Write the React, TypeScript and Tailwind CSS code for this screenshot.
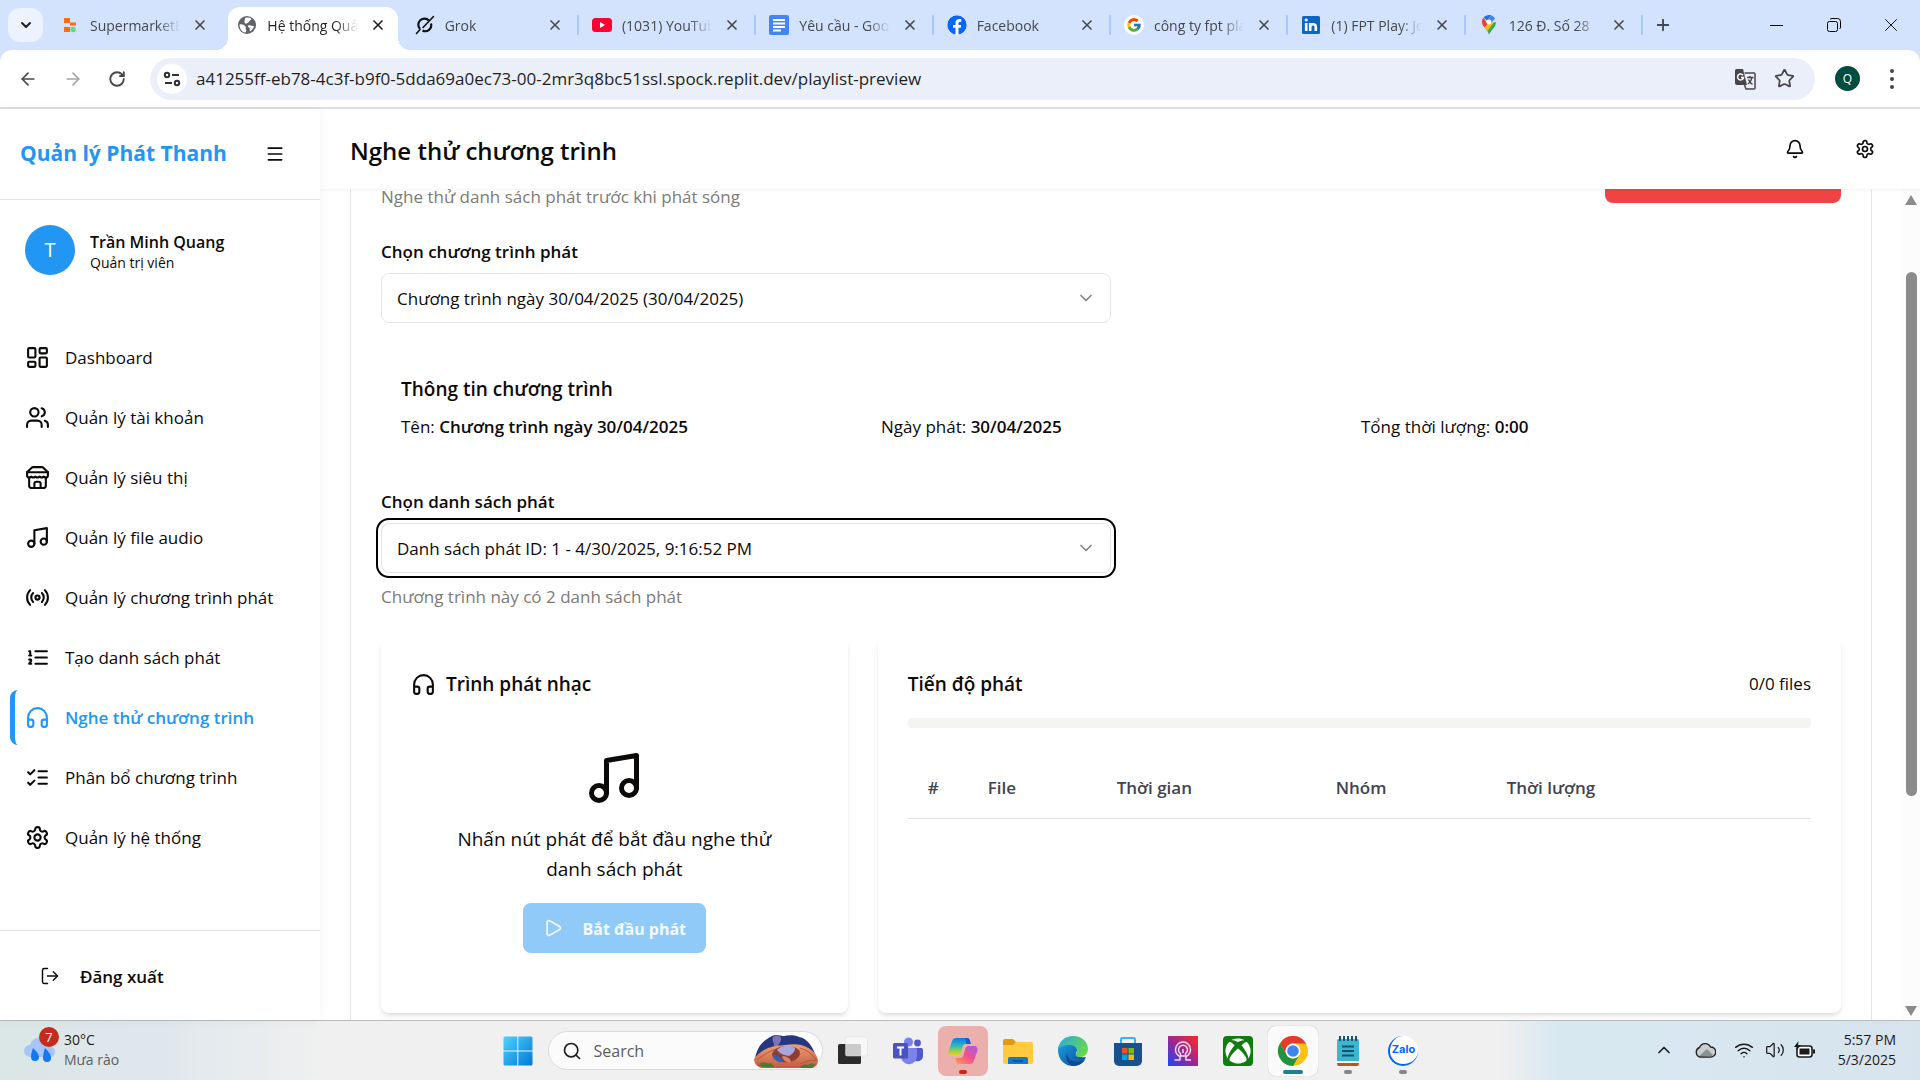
import type { ReactNode } from "react";
import {
  ArrowLeft,
  ArrowRight,
  Bell,
  ChevronDown,
  ChevronUp,
  Headphones,
  LayoutDashboard,
  LogOut,
  Menu,
  Music,
  Play,
  Plus,
  Radio,
  RotateCw,
  Search,
  Star,
  Users,
  Volume2,
  Wifi,
  X,
} from "lucide-react";
import { FaFacebook, FaXbox } from "react-icons/fa";
import { FcGoogle } from "react-icons/fc";

/* ---------- stroke icons ---------- */

type IconProps = { className?: string; children?: ReactNode };

function Stroke({ className, children }: IconProps) {
  return (
    <svg
      viewBox="0 0 24 24"
      fill="none"
      stroke="currentColor"
      strokeWidth="2"
      strokeLinecap="round"
      strokeLinejoin="round"
      className={className}
      aria-hidden="true"
    >
      {children}
    </svg>
  );
}

const GearIcon = ({ className }: IconProps) => (
  <Stroke className={className}>
    <path d="M12.22 2h-.44a2 2 0 0 0-2 2v.18a2 2 0 0 1-1 1.73l-.43.25a2 2 0 0 1-2 0l-.15-.08a2 2 0 0 0-2.73.73l-.22.38a2 2 0 0 0 .73 2.73l.15.1a2 2 0 0 1 1 1.72v.51a2 2 0 0 1-1 1.74l-.15.09a2 2 0 0 0-.73 2.73l.22.38a2 2 0 0 0 2.73.73l.15-.08a2 2 0 0 1 2 0l.43.25a2 2 0 0 1 1 1.73V20a2 2 0 0 0 2 2h.44a2 2 0 0 0 2-2v-.18a2 2 0 0 1 1-1.73l.43-.25a2 2 0 0 1 2 0l.15.08a2 2 0 0 0 2.73-.73l.22-.39a2 2 0 0 0-.73-2.73l-.15-.08a2 2 0 0 1-1-1.74v-.5a2 2 0 0 1 1-1.74l.15-.09a2 2 0 0 0 .73-2.73l-.22-.38a2 2 0 0 0-2.73-.73l-.15.08a2 2 0 0 1-2 0l-.43-.25a2 2 0 0 1-1-1.73V4a2 2 0 0 0-2-2z" />
    <circle cx="12" cy="12" r="3" />
  </Stroke>
);

const StoreIcon = ({ className }: IconProps) => (
  <Stroke className={className}>
    <path d="m2 7 4.41-4.41A2 2 0 0 1 7.83 2h8.34a2 2 0 0 1 1.42.59L22 7" />
    <path d="M4 12v8a2 2 0 0 0 2 2h12a2 2 0 0 0 2-2v-8" />
    <path d="M15 22v-4a2 2 0 0 0-2-2h-2a2 2 0 0 0-2 2v4" />
    <path d="M2 7h20" />
    <path d="M22 7v3a2 2 0 0 1-2 2a2.7 2.7 0 0 1-1.59-.63.7.7 0 0 0-.82 0A2.7 2.7 0 0 1 16 12a2.7 2.7 0 0 1-1.59-.63.7.7 0 0 0-.82 0A2.7 2.7 0 0 1 12 12a2.7 2.7 0 0 1-1.59-.63.7.7 0 0 0-.82 0A2.7 2.7 0 0 1 8 12a2.7 2.7 0 0 1-1.59-.63.7.7 0 0 0-.82 0A2.7 2.7 0 0 1 4 12a2 2 0 0 1-2-2V7" />
  </Stroke>
);

const OrderedIcon = ({ className }: IconProps) => (
  <Stroke className={className}>
    <path d="M10 6h11M10 12h11M10 18h11M4 6h1v4M4 10h2M6 18H4c0-1 2-2 2-3s-1-1.5-2-1" />
  </Stroke>
);

const ChecksIcon = ({ className }: IconProps) => (
  <Stroke className={className}>
    <path d="m3 17 2 2 4-4M3 7l2 2 4-4M13 6h8M13 12h8M13 18h8" />
  </Stroke>
);

/* ---------- browser tabs ---------- */

const ReplitLogo = () => (
  <svg viewBox="0 0 20 20" className="size-5">
    <path fill="#ff6a13" d="M4 3h6v5H4zM4 12h6v5H4zM10 7.500h6v3h-6z" />
    <circle cx="13" cy="14.500" r="2.700" fill="#5fdc7a" />
  </svg>
);
const GlobeLogo = () => (
  <svg viewBox="0 0 20 20" className="size-5">
    <circle cx="10" cy="10" r="9" fill="#5f6368" />
    <path fill="#fff" d="M2.500 9.500c2.500-.5 4.500.5 6 2 1 1-.5 2 .5 3.500.6 1 .2 2-.8 2.600C5 17 2.500 14 2.500 9.500zM9 2.500c2-.3 4 0 5.500 1.500-.5 1.500-2 1-2.500 2.500s-1.500 1-2.500 2S7 7.500 7.500 6 7.500 3.500 9 2.500zM11 10.500c2-1 3.500.5 6 .5-.5 2.500-2 4.500-4 5.500-1-1.500.5-2.500-.5-3.500s-2-1.500-1.500-2.500z" />
  </svg>
);
const GrokLogo = () => (
  <svg viewBox="0 0 20 20" className="size-5">
    <path fill="none" stroke="#111" strokeWidth="2.200" d="M14 5.500A6 6 0 0 0 5 14M16 8.500A6 6 0 0 1 7.500 15.500" />
    <path fill="none" stroke="#111" strokeWidth="1.600" strokeLinecap="round" d="M18.500 1.500 8 12.500M5 14.500 1.500 18.500" />
  </svg>
);
const YoutubeLogo = () => (
  <svg viewBox="0 0 20 20" className="size-5">
    <rect y="3" width="20" height="14" rx="3.500" fill="#ff0033" />
    <path fill="#fff" d="m8 7 5 3-5 3z" />
  </svg>
);
const DocsLogo = () => (
  <svg viewBox="0 0 20 20" className="size-5">
    <rect width="20" height="20" rx="2" fill="#4285f4" />
    <path stroke="#fff" strokeWidth="2" d="M4 5h12M4 8.500h12M4 12h12M4 15.500h8" />
  </svg>
);
const GoogleLogo = () => (
  <span className="flex size-5 items-center justify-center rounded-full bg-white">
    <FcGoogle className="size-4" />
  </span>
);
const LinkedinLogo = () => (
  <svg viewBox="0 0 20 20" className="size-5">
    <rect x="1" y="1" width="18" height="18" rx="1.500" fill="#0a66c2" />
    <path stroke="#fff" strokeWidth="2.600" fill="none" d="M5.200 8v8M9.200 8v8M9.200 12c0-3.500 5.600-4 5.600 0v4" />
    <circle cx="5.200" cy="5" r="1.600" fill="#fff" />
  </svg>
);
const MapsLogo = () => (
  <svg viewBox="0 0 20 20" className="size-5">
    <path fill="#34a853" d="M10 20c.6-4 7-7 7-13L10 9 5.500 12.500C7.500 15 9.500 17 10 20z" />
    <path fill="#fbbc04" d="M5.500 12.500 12 4.500l2 4-5.500 7.500z" />
    <path fill="#ea4335" d="M3 7c0 2 1 4 2.500 5.500L8.500 9 4.600 2.500C3.500 3.800 3 5.200 3 7z" />
    <path fill="#1a73e8" d="M4.600 2.500 8 5.500 12.500.4C9.500-.5 6.500.3 4.600 2.500z" />
    <path fill="#4285f4" d="M12.500.4 8.500 5 12 8.500l4-5C15.200 2 14 .9 12.500.4z" />
    <circle cx="10" cy="7" r="2.500" fill="#fff" />
  </svg>
);

const tabs: { title: string; icon: ReactNode; active?: boolean; divider?: boolean }[] = [
  { title: "SupermarketBroadcast", icon: <ReplitLogo /> },
  { title: "Hệ thống Quản lý", icon: <GlobeLogo />, active: true },
  { title: "Grok", icon: <GrokLogo />, divider: true },
  { title: "(1031) YouTube", icon: <YoutubeLogo />, divider: true },
  { title: "Yêu cầu - Google", icon: <DocsLogo />, divider: true },
  { title: "Facebook", icon: <FaFacebook className="size-5 rounded-full bg-white text-[#0866ff]" />, divider: true },
  { title: "công ty fpt play", icon: <GoogleLogo />, divider: true },
  { title: "(1) FPT Play: Jobs", icon: <LinkedinLogo />, divider: true },
  { title: "126 Đ. Số 28", icon: <MapsLogo />, divider: true },
];

function TabStrip() {
  return (
    <div className="flex h-[50px] items-stretch bg-[#d3e3fd] text-[#45484d]">
      <div className="flex w-[47px] shrink-0 items-center pl-2">
        <button aria-label="Tìm kiếm thẻ" className="flex h-[34px] w-[35px] items-center justify-center rounded-xl bg-[#ecf2fe] text-[#1f1f1f]">
          <ChevronDown className="size-4" strokeWidth={3} />
        </button>
      </div>
      <div role="tablist" className="flex min-w-0 max-w-[1596px] flex-1">
        {tabs.map((t) => (
          <div key={t.title} className="relative flex min-w-0 flex-1 items-center pl-[13px] pr-4">
            {t.active && (
              <div className="absolute inset-y-0 left-1 right-1 top-[7px] rounded-t-xl bg-white before:absolute before:-left-3 before:bottom-0 before:size-3 before:bg-[radial-gradient(circle_at_0_0,transparent_12px,white_12px)] after:absolute after:-right-3 after:bottom-0 after:size-3 after:bg-[radial-gradient(circle_at_100%_0,transparent_12px,white_12px)]" />
            )}
            <button role="tab" aria-selected={!!t.active} className="relative flex min-w-0 flex-1 items-center gap-[10px]">
              <span className="shrink-0">{t.icon}</span>
              <span
                className={
                  "min-w-0 flex-1 overflow-hidden whitespace-nowrap pt-px text-left text-sm [mask-image:linear-gradient(90deg,black_75%,transparent)] " +
                  (t.active ? "text-[#1f1f1f]" : "")
                }
              >
                {t.title}
              </span>
            </button>
            <button aria-label={"Đóng " + t.title} className={"relative ml-3 shrink-0 " + (t.active ? "text-[#1f1f1f]" : "")}>
              <X className="size-4" strokeWidth={2.5} />
            </button>
            {t.divider && <span className="absolute right-0 top-[15px] h-5 w-0.5 rounded bg-[#a8c7fa]" />}
          </div>
        ))}
      </div>
      <button aria-label="Thẻ mới" className="ml-[7px] flex items-center px-1">
        <Plus className="size-[18px]" strokeWidth={2.5} />
      </button>
      <div className="ml-auto flex shrink-0 pr-px text-black">
        <button aria-label="Thu nhỏ" className="flex w-[57px] items-center justify-center">
          <span className="h-px w-[13px] bg-black" />
        </button>
        <button aria-label="Khôi phục" className="flex w-[57px] items-center justify-center">
          <svg viewBox="0 0 14 14" className="size-[14px]" fill="none" stroke="currentColor">
            <rect x=".5" y="3.500" width="10" height="10" rx="2" />
            <path d="M3 1.500C3.500.8 4 .5 5 .5h5.500a3 3 0 0 1 3 3V9c0 1-.3 1.500-1 2" />
          </svg>
        </button>
        <button aria-label="Đóng cửa sổ" className="flex w-[57px] items-center justify-center">
          <X className="size-[22px]" strokeWidth={1} />
        </button>
      </div>
    </div>
  );
}

function Toolbar() {
  return (
    <div className="bg-[#d3e3fd]">
      <div className="flex h-[59px] items-center rounded-t-xl border-b-2 border-[#dfdfdf] bg-white pl-4 pr-4 text-[#474747]">
        <button aria-label="Quay lại" className="flex w-[24px] justify-center"><ArrowLeft className="size-5" /></button>
        <button aria-label="Tiến" className="ml-[21px] flex w-[24px] justify-center text-[#a5a5a5]"><ArrowRight className="size-5" /></button>
        <button aria-label="Tải lại" className="ml-[20px] flex w-[24px] justify-center"><RotateCw className="size-[18px]" strokeWidth={2.5} /></button>
        <div className="ml-[21px] flex h-[42px] min-w-0 flex-1 items-center rounded-full bg-[#ebeffa] pl-[7px] pr-5">
          <button aria-label="Thông tin trang web" className="flex size-[30px] shrink-0 items-center justify-center rounded-full bg-white text-[#303134]">
            <svg viewBox="0 0 18 18" className="size-[18px]" fill="none" stroke="currentColor" strokeWidth="2">
              <circle cx="4" cy="5" r="2.200" />
              <path d="M9 5h7M2 13h7" />
              <circle cx="14" cy="13" r="2.200" />
            </svg>
          </button>
          <input
            aria-label="Địa chỉ"
            className="ml-[9px] min-w-0 flex-1 bg-transparent text-[17px] text-[#1f1f1f] outline-none"
            defaultValue="a41255ff-eb78-4c3f-b9f0-5dda69a0ec73-00-2mr3q8bc51ssl.spock.replit.dev/playlist-preview"
          />
          <button aria-label="Dịch trang này">
            <svg viewBox="0 0 22 22" className="size-[22px]">
              <path fill="#474747" d="M2.500 1H9l4 16H3a2 2 0 0 1-2-2V2.500A1.500 1.500 0 0 1 2.500 1z" />
              <path fill="none" stroke="#fff" strokeWidth="1.500" d="M9 7.200a3 3 0 1 0 .5 2.300H7" />
              <path fill="none" stroke="#474747" strokeWidth="1.500" d="M10.500 5H20a1 1 0 0 1 1 1v14a1 1 0 0 1-1 1h-8l-1.500-4M13 9.500h6.500M16 8v1.500M18 9.500c-.5 3-2 5-4 6.500M14.500 11.500c.8 2 2 3.500 4 5" />
            </svg>
          </button>
          <button aria-label="Dấu trang" className="ml-[18px]"><Star className="size-[21px]" /></button>
        </div>
        <button aria-label="Hồ sơ" className="ml-5 flex size-[25px] items-center justify-center rounded-full bg-[#004d40] text-xs text-white">Q</button>
        <button aria-label="Trình đơn" className="ml-[26px] flex w-3 flex-col items-center gap-[4px]">
          <span className="size-1 rounded-full bg-[#474747]" />
          <span className="size-1 rounded-full bg-[#474747]" />
          <span className="size-1 rounded-full bg-[#474747]" />
        </button>
        <span className="w-1.5" />
      </div>
    </div>
  );
}

/* ---------- sidebar ---------- */

const navItems = [
  { label: "Dashboard", Icon: LayoutDashboard },
  { label: "Quản lý tài khoản", Icon: Users },
  { label: "Quản lý siêu thị", Icon: StoreIcon },
  { label: "Quản lý file audio", Icon: Music },
  { label: "Quản lý chương trình phát", Icon: Radio },
  { label: "Tạo danh sách phát", Icon: OrderedIcon },
  { label: "Nghe thử chương trình", Icon: Headphones, active: true },
  { label: "Phân bổ chương trình", Icon: ChecksIcon },
  { label: "Quản lý hệ thống", Icon: GearIcon },
];

function Sidebar() {
  return (
    <aside className="z-10 flex w-80 shrink-0 flex-col bg-white shadow-[0_0_10px_rgba(0,0,0,0.06)]">
      <div className="flex h-[91px] shrink-0 items-center justify-between border-b border-[#e3e3e3] px-5">
        <span className="text-[21px] font-bold text-[#2196f3]">Quản lý Phát Thanh</span>
        <button aria-label="Thu gọn" className="mr-[15px]"><Menu className="size-5" /></button>
      </div>
      <div className="flex shrink-0 items-center gap-[15px] px-[25px] pt-[25px]">
        <span className="flex size-[50px] items-center justify-center rounded-full bg-[#2196f3] text-xl text-white">T</span>
        <div className="pt-[3px]">
          <p className="text-base leading-[22px] font-semibold">Trần Minh Quang</p>
          <p className="text-[14px] leading-5">Quản trị viên</p>
        </div>
      </div>
      <nav className="mt-[55px] flex flex-1 flex-col gap-[5px] px-[10px]">
        {navItems.map(({ label, Icon, active }) => (
          <a
            key={label}
            href="#"
            className={
              "flex h-[55px] items-center gap-[15px] rounded-lg border-l-[5px] pl-[10px] text-[17px] " +
              (active ? "border-[#2196f3] font-semibold text-[#2196f3]" : "border-transparent")
            }
          >
            <Icon className="size-[25px]" />
            <span className="pt-px">{label}</span>
          </a>
        ))}
      </nav>
      <div className="flex h-[90px] shrink-0 items-center border-t border-[#e3e3e3] px-10">
        <button className="flex items-center gap-5 text-[17px] font-semibold">
          <LogOut className="size-5" strokeWidth={1.75} />
          <span className="pt-0.5">Đăng xuất</span>
        </button>
      </div>
    </aside>
  );
}

/* ---------- main page ---------- */

function SelectBox({ id, value, focused }: { id: string; value: string; focused?: boolean }) {
  return (
    <div className="relative w-1/2">
      <select
        id={id}
        defaultValue={value}
        className={
          "h-[50px] w-full appearance-none rounded-lg border border-[#e5e5e5] bg-white px-[15px] pt-0.5 text-[17px] outline-none " +
          (focused ? "ring-[2px] ring-black ring-offset-[3px]" : "")
        }
      >
        <option>{value}</option>
      </select>
      <ChevronDown className="pointer-events-none absolute right-[15px] top-[15px] size-5 opacity-50" />
    </div>
  );
}

function PlayerCard() {
  return (
    <section className="rounded-lg bg-white p-[30px] shadow-md">
      <h3 className="flex items-center gap-[10px] text-[19px] leading-8 font-semibold">
        <Headphones className="size-[25px]" />
        Trình phát nhạc
      </h3>
      <div className="mt-[48px] flex flex-col items-center text-center">
        <Music className="size-[60px]" />
        <p className="mt-4 w-[340px] text-[19px] leading-[30px]">Nhấn nút phát để bắt đầu nghe thử danh sách phát</p>
        <button disabled className="mt-[19px] flex h-[50px] items-center gap-5 rounded-lg bg-[#90caf9] px-5 text-base font-bold text-white/90">
          <Play className="size-5" />
          <span className="pt-0.5">Bắt đầu phát</span>
        </button>
      </div>
    </section>
  );
}

function ProgressCard() {
  const th = "h-[60px] px-5 text-left text-[17px] font-semibold text-[#41444f] ";
  return (
    <section className="col-span-2 rounded-lg bg-white p-[30px] shadow-md">
      <div className="flex items-center justify-between leading-8">
        <h3 className="text-[19px] font-semibold">Tiến độ phát</h3>
        <span className="text-[17px]">0/0 files</span>
      </div>
      <div role="progressbar" aria-label="Tiến độ phát" aria-valuenow={0} className="mt-[18px] h-[10px] rounded bg-[#f4f4f3]" />
      <table className="mt-[30px] w-full table-fixed border-b border-[#e3e3e3]">
        <thead>
          <tr>
            <th scope="col" className={th + "w-[60px]"}>#</th>
            <th scope="col" className={th + "w-[129px]"}>File</th>
            <th scope="col" className={th + "w-[219px]"}>Thời gian</th>
            <th scope="col" className={th + "w-[171px]"}>Nhóm</th>
            <th scope="col" className={th}>Thời lượng</th>
          </tr>
        </thead>
      </table>
    </section>
  );
}

function Scrollbar() {
  return (
    <div aria-hidden="true" className="flex w-[18px] shrink-0 flex-col items-center bg-[#fcfcfc] pb-1 pt-[6px]">
      <span className="h-[10px] w-3 bg-[#8b8b8b] [clip-path:polygon(50%_0,100%_100%,0_100%)]" />
      <div className="grid w-[11px] flex-1 grid-rows-[67fr_524fr_210fr]">
        <div className="row-start-2 rounded-full bg-[#8b8b8b]" />
      </div>
      <span className="h-[10px] w-3 bg-[#8b8b8b] [clip-path:polygon(0_0,100%_0,50%_100%)]" />
    </div>
  );
}

function MainPage() {
  return (
    <div className="flex min-w-0 flex-1 flex-col">
      <header className="z-[5] flex h-20 shrink-0 items-center justify-between bg-white pl-[30px] pr-[45px] shadow-[0_1px_3px_rgba(0,0,0,0.06)]">
        <h1 className="pt-1 text-2xl font-semibold">Nghe thử chương trình</h1>
        <div className="flex gap-[50px]">
          <button aria-label="Thông báo"><Bell className="size-5" /></button>
          <button aria-label="Cài đặt"><GearIcon className="size-5" /></button>
        </div>
      </header>
      <div className="flex min-h-0 flex-1">
        <main className="min-w-0 flex-1 overflow-hidden px-[30px]">
          <div className="-mt-9 border-x border-[#e5e5e5] bg-white px-[30px]">
            <div className="flex h-[50px] items-end justify-between">
              <p className="-mb-1.5 text-[17px] leading-[25px] text-[#7d7a76]">Nghe thử danh sách phát trước khi phát sóng</p>
              <button aria-label="Dừng phát" className="h-[50px] w-[236px] rounded-lg bg-[#ef4444]" />
            </div>
            <label htmlFor="program" className="mt-[36px] block text-[17px] leading-[25px] font-semibold">Chọn chương trình phát</label>
            <div className="mt-[9px]">
              <SelectBox id="program" value="Chương trình ngày 30/04/2025 (30/04/2025)" />
            </div>
            <div className="mt-[51px] px-5">
              <h2 className="text-[19px] leading-[30px] font-semibold">Thông tin chương trình</h2>
              <div className="mt-[10px] grid grid-cols-3 gap-5 text-[17px] leading-[25px]">
                <p>Tên: <b className="font-semibold">Chương trình ngày 30/04/2025</b></p>
                <p>Ngày phát: <b className="font-semibold">30/04/2025</b></p>
                <p>Tổng thời lượng: <b className="font-semibold">0:00</b></p>
              </div>
            </div>
            <label htmlFor="playlist" className="mt-[50px] block text-[17px] leading-[25px] font-semibold">Chọn danh sách phát</label>
            <div className="mt-[9px]">
              <SelectBox id="playlist" value="Danh sách phát ID: 1 - 4/30/2025, 9:16:52 PM" focused />
            </div>
            <p className="mt-[11px] text-[17px] leading-[25px] text-[#7d7a76]">Chương trình này có 2 danh sách phát</p>
            <div className="mt-[29px] grid min-h-[375px] grid-cols-3 gap-[30px]">
              <PlayerCard />
              <ProgressCard />
            </div>
            <div className="h-[30px]" />
          </div>
        </main>
        <Scrollbar />
      </div>
    </div>
  );
}

/* ---------- taskbar ---------- */

const WindowsLogo = () => (
  <svg viewBox="0 0 30 30" className="size-[30px]">
    <defs>
      <linearGradient id="win" x1="0" y1="0" x2="1" y2="1">
        <stop offset="0" stopColor="#4fd3ff" />
        <stop offset="1" stopColor="#0078d4" />
      </linearGradient>
    </defs>
    <path fill="url(#win)" d="M2 .5h12.300v14H.5V2A1.500 1.500 0 0 1 2 .5zM15.300.5H28A1.500 1.500 0 0 1 29.500 2v12.500H15.300zM.5 15.500h13.800v14H2A1.500 1.500 0 0 1 .5 28zM15.300 15.500h14.200V28a1.500 1.500 0 0 1-1.500 1.500H15.300z" />
  </svg>
);
const SearchArt = () => (
  <svg viewBox="0 0 64 34" className="h-[34px] w-16 shrink-0">
    <defs>
      <linearGradient id="rock" x1="0" y1="0" x2="0" y2="1">
        <stop offset="0" stopColor="#f0a273" />
        <stop offset="1" stopColor="#c05a42" />
      </linearGradient>
    </defs>
    <path fill="#27367f" d="M1 25C3 12 10 6 18 2c5-2.500 9 0 12 0 5-1.500 12-1 15 1 9 1 15 12 17 20z" />
    <path fill="#7d74b8" d="M19 3c4-3 9-1 8 3s-4 5-3 9l-5-1c3-4-2-7 0-11z" />
    <path fill="url(#rock)" d="M0 25c6-8 14-12 22-13s18-3 25-1c8 2 16 8 17 15 0 4-2 7-6 8H8c-5-1-8-5-8-9z" />
    <path fill="none" stroke="#b5563c" strokeWidth="1" d="M3 26c8-6 12-9 20-11M46 14c7 2 12 6 16 11M4 31c6-1 10-2 14-1M46 30c6-3 11-4 17-4" />
    <path fill="#8e3d32" d="M18 20c2-6 9-8 15-8 7 0 13 3 13 7s-5 8-10 9c-8 1-18-1-18-8z" />
    <path fill="#a9a6dc" d="M23 16c3-4 13-6 18-2 0 4-3 6-6 8-5-1-9-2-12-6z" />
    <path fill="#2a63b8" d="M19 20c4 1 9 4 11 8-5 1-11-2-11-8z" />
    <path fill="#d98563" d="M28 22c5 0 9 3 9 6-4 1-8-1-9-6z" />
    <path fill="#4b7a32" d="M5 30c3-2 7-2 9 0 3-1 6 1 6 3H8zM46 33c2-3 6-3 8-2 2-2 6-2 7 0l-3 3H47z" />
  </svg>
);
const TaskViewIcon = () => (
  <svg viewBox="0 0 30 30" className="size-[30px]">
    <rect y="8" width="23" height="20" rx="1.500" fill="#2b2b2b" />
    <rect x="7.500" y="1" width="22" height="19" rx="1.500" fill="#f8f8f8" fillOpacity=".78" stroke="#ddd" strokeWidth=".5" />
  </svg>
);
const TeamsIcon = () => (
  <svg viewBox="0 0 30 30" className="size-[30px]">
    <circle cx="24.500" cy="7" r="3.400" fill="#5059c9" />
    <path fill="#5059c9" d="M19 12h9.500a1.500 1.500 0 0 1 1.500 1.500V20a5.500 5.500 0 0 1-9 4z" />
    <circle cx="15.500" cy="6" r="4.500" fill="#7b83eb" />
    <path fill="#7b83eb" d="M8 12h14.500a1.500 1.500 0 0 1 1.500 1.500V20a8 8 0 0 1-16 .5z" />
    <rect y="7" width="15" height="15.500" rx="1.500" fill="#4b53bc" />
    <path stroke="#fff" strokeWidth="2" d="M4 11.500h7M7.500 11.500v8" />
  </svg>
);
const CopilotIcon = () => (
  <svg viewBox="0 0 30 30" className="size-[30px]">
    <defs>
      <linearGradient id="cpa" x1="0" y1="0" x2="0" y2="1">
        <stop offset="0" stopColor="#0a7be0" />
        <stop offset=".4" stopColor="#27b4c9" />
        <stop offset=".7" stopColor="#8fd14a" />
        <stop offset="1" stopColor="#ffc928" />
      </linearGradient>
      <linearGradient id="cpb" x1="1" y1="0" x2="0" y2="1">
        <stop offset="0" stopColor="#a35cf5" />
        <stop offset=".5" stopColor="#f2508b" />
        <stop offset="1" stopColor="#ffa046" />
      </linearGradient>
    </defs>
    <path fill="url(#cpa)" d="M8.500 2H19c2 0 2.600 1.500 3 3l.8 3H18c-2 0-3 1-3.600 3l-1.600 6c-.7 2.500-2 3-4 3H4c-3 0-4-2-3.300-5L4 5.500C4.800 3 6 2 8.500 2z" />
    <path fill="url(#cpb)" d="M21.500 28H11c-2 0-2.600-1.500-3-3l-.8-3H12c2 0 3-1 3.600-3l1.600-6c.7-2.500 2-3 4-3H26c3 0 4 2 3.300 5L26 24.500C25.200 27 24 28 21.500 28z" />
    <path fill="#0f5fd0" d="M17 2h2c2 0 2.600 1.500 3 3l.8 3H18.500z" />
  </svg>
);
const ExplorerIcon = () => (
  <svg viewBox="0 0 30 30" className="size-[30px]">
    <path fill="#e09a12" d="M0 5a2 2 0 0 1 2-2h8l3 3v5H0z" />
    <path fill="#ffca3e" d="M0 9h10l3-3h15a2 2 0 0 1 2 2v18a2 2 0 0 1-2 2H2a2 2 0 0 1-2-2z" />
    <path fill="#1379cf" d="M5 28v-5a2 2 0 0 1 2-2h16a2 2 0 0 1 2 2v5z" />
    <path stroke="#0b4d8c" strokeWidth="1.500" d="M10 25h10" />
  </svg>
);
const EdgeIcon = () => (
  <svg viewBox="0 0 30 30" className="size-[30px]">
    <defs>
      <linearGradient id="edt" x1="0" y1="0" x2="1" y2=".5">
        <stop offset="0" stopColor="#2aa6e8" />
        <stop offset="1" stopColor="#62d94e" />
      </linearGradient>
      <linearGradient id="edb" x1="0" y1="0" x2="1" y2="1">
        <stop offset="0" stopColor="#1b9de0" />
        <stop offset="1" stopColor="#0c4a9c" />
      </linearGradient>
    </defs>
    <path fill="url(#edb)" d="M0 14C0 7 5 6 11 7c5 0 9 3 8 8-3 4 0 7 9 6-2 5-7 9-13 9C7 30 0 24 0 14z" />
    <path fill="url(#edt)" d="M0 14C1 5 7 0 15 0c9 0 15 6 15 13 0 5-4 8-8 8-3 0-5-1-4-3 3-5-1-9-6-9C6 9 1 11 0 14z" />
    <path fill="#114a8b" d="M9 17c0 7 6 10 14 8.500 2-.5 4-1.500 5-3C25.500 27 21 30 15 30 9 28 7 22 9 17z" />
  </svg>
);
const StoreAppIcon = () => (
  <svg viewBox="0 0 30 30" className="size-[30px]">
    <path fill="none" stroke="#35b4f2" strokeWidth="2" d="M8 8V3.500A1.500 1.500 0 0 1 9.500 2h11A1.500 1.500 0 0 1 22 3.500V8" />
    <path fill="#17528f" d="M1 7h28v18a5 5 0 0 1-5 5H6a5 5 0 0 1-5-5z" />
    <path fill="#f25022" d="M9 12h5.500v5.500H9z" />
    <path fill="#7fba00" d="M15.500 12H21v5.500h-5.500z" />
    <path fill="#00a4ef" d="M9 18.500h5.500V24H9z" />
    <path fill="#ffb900" d="M15.500 18.500H21V24h-5.500z" />
  </svg>
);
const PredatorIcon = () => (
  <svg viewBox="0 0 30 30" className="size-[30px]">
    <defs>
      <linearGradient id="prd" x1="0" y1="1" x2="1" y2="0">
        <stop offset="0" stopColor="#1646ff" />
        <stop offset=".5" stopColor="#a1268e" />
        <stop offset="1" stopColor="#ff2a20" />
      </linearGradient>
    </defs>
    <rect width="30" height="30" fill="url(#prd)" />
    <path fill="none" stroke="#f3dcf0" strokeWidth="1.500" strokeLinejoin="round" d="M6.500 24H12v-3.500C9 19 7.500 17 7.500 13.500a7.500 7.500 0 0 1 15 0c0 3.500-1.500 5.500-4.500 7V24h5" />
    <path fill="none" stroke="#f3dcf0" strokeWidth="1.500" strokeLinejoin="round" d="M12.500 17.500a4.500 4.500 0 1 1 5 0V20h-5zM15 13v4" />
  </svg>
);
const XboxIcon = () => (
  <span className="flex size-[30px] items-center justify-center rounded-sm bg-[#107c10]">
    <FaXbox className="size-[26px] text-white" />
  </span>
);
const ChromeIcon = () => (
  <svg viewBox="0 0 30 30" className="size-[30px]">
    <circle cx="15" cy="15" r="15" fill="#fbc116" />
    <path fill="#e33b2e" d="M2 7.500A15 15 0 0 1 28 7.500H15a7.500 7.500 0 0 0-6.500 11.200z" />
    <path fill="#229342" d="M2 7.500a15 15 0 0 0 13 22.500l6.500-11.300a7.500 7.500 0 0 1-13 0z" />
    <circle cx="15" cy="15" r="7.500" fill="#fff" />
    <circle cx="15" cy="15" r="5.800" fill="#3f83f0" />
  </svg>
);
const NotepadIcon = () => (
  <svg viewBox="0 0 30 30" className="size-[30px]">
    <rect x="4" y="3" width="22" height="25" rx="1.500" fill="#3cb6d0" />
    <path fill="#b65a17" d="M4 27h22v1a2 2 0 0 1-2 2H6a2 2 0 0 1-2-2z" />
    <path fill="#f4f4f4" d="M4 25h22v2H4z" />
    <path stroke="#135567" strokeWidth="2" d="M9 10.500h12M9 15h12M9 19.500h12M7 0v5M11 0v5M15 0v5M19 0v5M23 0v5" />
  </svg>
);
const ZaloIcon = () => (
  <span className="flex size-[30px] items-center justify-center rounded-full border-b-2 border-l-2 border-[#0068ff] bg-white font-['Inter'] text-[11px] font-bold text-[#0068ff]">
    Zalo
  </span>
);

const apps: { name: string; icon: ReactNode; state?: "active" | "open" }[] = [
  { name: "Explorer", icon: <ExplorerIcon /> },
  { name: "Edge", icon: <EdgeIcon /> },
  { name: "Microsoft Store", icon: <StoreAppIcon /> },
  { name: "PredatorSense", icon: <PredatorIcon /> },
  { name: "Xbox", icon: <XboxIcon /> },
  { name: "Chrome", icon: <ChromeIcon />, state: "active" },
  { name: "Notepad", icon: <NotepadIcon />, state: "open" },
  { name: "Zalo", icon: <ZaloIcon />, state: "open" },
];

function Taskbar() {
  const slot = "relative flex size-[50px] items-center justify-center rounded-lg ";
  return (
    <footer className="grid h-[60px] shrink-0 grid-cols-[1fr_auto_1fr] items-center border-t border-[#b9bbbd] bg-[linear-gradient(90deg,#dbe6e6,#dfe7ec_8%,#f0f0f0_17%,#f0f0f0_78%,#d8e8f1_81%,#d7e4ee)]">
      <button className="flex items-center gap-[9px] pb-0.5 pl-6 text-left text-sm leading-5">
        <span className="relative">
          <svg viewBox="0 0 31 30" className="h-[30px] w-[31px]">
            <path fill="#a9c5f5" d="M6 22a6 6 0 0 1 0-12C8 4 13 2 17 3c5 1 7 4 7.500 8C29 11 31 14 31 17s-2 5-5 5z" />
            <path fill="#1378f5" d="M9 13c3 3 6 6 6 9a4 4 0 0 1-8 0c0-3 1-6 2-9zM21 13c3 3 6 6 6 10a4 4 0 0 1-8 0c0-4 1-7 2-10z" />
          </svg>
          <span className="absolute -right-1 -top-2 flex size-5 items-center justify-center rounded-full bg-[#c42b1c] text-[13px] text-white">7</span>
        </span>
        <span>
          <span className="block text-[#1b1b1b]">30°C</span>
          <span className="block text-[#5b5f62]">Mưa rào</span>
        </span>
      </button>
      <div className="flex items-center gap-[5px]">
        <button aria-label="Bắt đầu" className={slot}><WindowsLogo /></button>
        <label className="flex h-[39px] w-[275px] items-center rounded-full border border-[#dadada] bg-[#fbfbfb] pl-[13px] pr-1">
          <Search className="size-5 shrink-0 text-[#1f1f1f]" />
          <input aria-label="Search" placeholder="Search" className="ml-3 min-w-0 flex-1 bg-transparent text-base outline-none placeholder:text-[#5d5d5d]" />
          <SearchArt />
        </label>
        <button aria-label="Chế độ xem tác vụ" className={slot}><TaskViewIcon /></button>
        <button aria-label="Teams" className={slot}><TeamsIcon /></button>
        <button aria-label="Copilot" className={slot + "bg-[#ebb0ac]"}>
          <CopilotIcon />
          <span className="absolute bottom-0.5 h-1 w-2 rounded-full bg-[#c42b1c]" />
        </button>
        {apps.map((a) => (
          <button key={a.name} aria-label={a.name} className={slot + (a.state === "active" ? "bg-[#fafafa] shadow-[0_0_1px_rgba(0,0,0,0.3)]" : "")}>
            {a.icon}
            {a.state === "active" && <span className="absolute bottom-0.5 h-1 w-5 rounded-full bg-[#1e7f91]" />}
            {a.state === "open" && <span className="absolute bottom-0.5 h-1 w-2 rounded-full bg-[#868686]" />}
          </button>
        ))}
      </div>
      <div className="flex items-center justify-end pb-0.5 pr-6 text-[#1b1b1b]">
        <button aria-label="Hiện biểu tượng ẩn"><ChevronUp className="size-5" /></button>
        <svg viewBox="0 0 22 18" className="ml-5 h-[18px] w-[22px]">
          <path d="M6 16a5 5 0 0 1-.5-9.500A6 6 0 0 1 16.500 6 5 5 0 0 1 17 16z" fill="#c9ced1" stroke="#222" strokeWidth="1.400" />
          <path d="M5 15l8-7 6 6-2 1.500z" fill="#8d9194" />
        </svg>
        <Wifi className="ml-[18px] size-5" strokeWidth={1.75} />
        <Volume2 className="ml-[11px] size-5" strokeWidth={1.5} />
        <svg viewBox="0 0 22 18" className="ml-[9px] h-[18px] w-[22px]">
          <rect x="3" y="5" width="15" height="11" rx="2.500" fill="#fff" stroke="#1b1b1b" strokeWidth="1.600" />
          <rect x="5.500" y="7.500" width="10" height="6" fill="#1b1b1b" />
          <path fill="#1b1b1b" d="M19 8.500h2v4h-2zM4.500 0 0 6h3l-1 4 5-6H4z" />
        </svg>
        <div className="ml-[18px] min-w-[62px] text-right text-sm leading-5">
          <p>5:57 PM</p>
          <p>5/3/2025</p>
        </div>
      </div>
    </footer>
  );
}

export default function App() {
  return (
    <div className="flex h-screen flex-col overflow-hidden bg-white font-['Open_Sans','Noto_Sans',sans-serif] text-[#0c0a09]">
      <TabStrip />
      <Toolbar />
      <div className="flex min-h-0 flex-1">
        <Sidebar />
        <MainPage />
      </div>
      <Taskbar />
    </div>
  );
}
